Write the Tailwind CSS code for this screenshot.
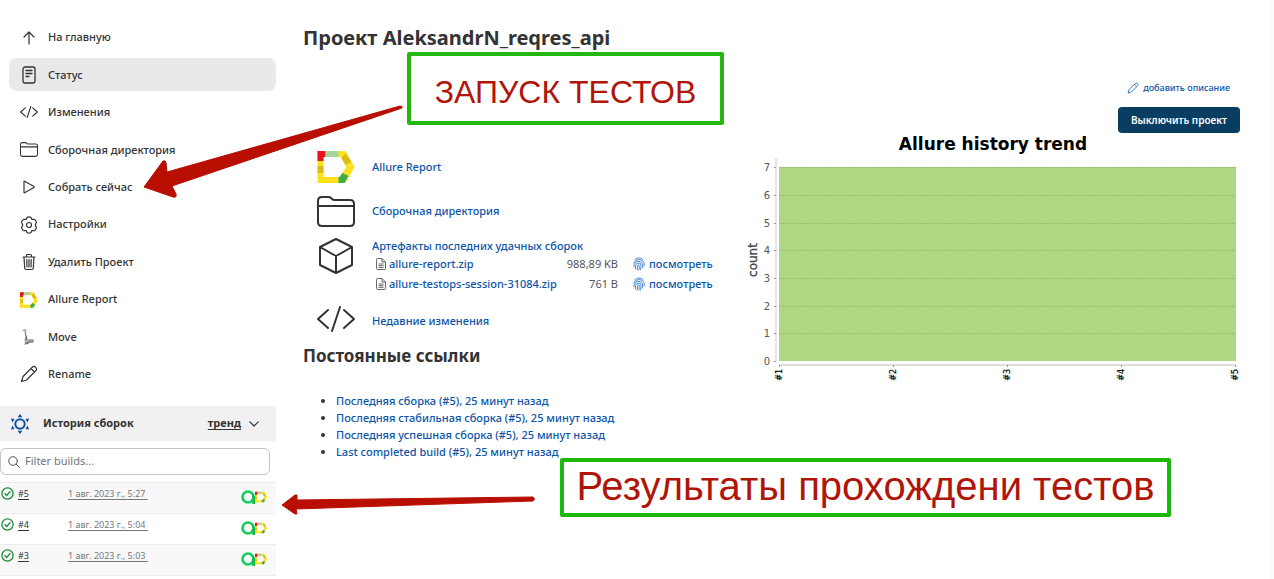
<!DOCTYPE html>
<html lang="ru">
<head>
<meta charset="utf-8">
<meta name="viewport" content="width=device-width, initial-scale=1">
<title>AleksandrN_reqres_api</title>
<script src="https://cdn.jsdelivr.net/npm/@tailwindcss/browser@4"></script>
</head>
<body class="relative flex min-h-screen overflow-x-hidden border-r-4 border-[#fbfbfb] bg-white font-['Noto_Sans','Open_Sans',sans-serif] text-[11px] text-[#333]">

<svg class="hidden" aria-hidden="true">
  <symbol id="allure" viewBox="0 0 37 32">
    <path fill="#ffe11a" d="M0 0H28L37 16L28 32H0ZM6 6V26H22L29 16L23 6Z" fill-rule="evenodd"/>
    <path fill="#e3141c" d="M0 0H8V6H6V10H0Z"/>
    <path fill="#a5d3a2" d="M8 0H21V6H8Z"/>
    <path fill="#dcbc16" d="M28 2L34 11L28 14L24 7ZM0 15H6V22H0Z"/>
    <path fill="#3fae49" d="M21 26H22L25 22L31 25L27 32H21Z"/>
  </symbol>
  <symbol id="folder" viewBox="0 0 38 31">
    <path d="M1 26V5Q1 1 5 1H11Q13 1 14 2L15 3Q16 4 18 4H33Q37 4 37 8V26Q37 30 33 30H5Q1 30 1 26ZM1 10H37" fill="none" stroke="currentColor" stroke-linejoin="round"/>
  </symbol>
  <symbol id="code" viewBox="0 0 38 26">
    <path d="M11 4L1 13L11 22M27 4L37 13L27 22M23 1L15 25" fill="none" stroke="currentColor" stroke-linecap="round" stroke-linejoin="round"/>
  </symbol>
  <symbol id="pencil" viewBox="0 0 18 18">
    <path d="M1.500 16.500L3 11.500L12.500 2Q14 .700 15.700 2.300Q17.300 4 16 5.500L6.500 15ZM11 3.500L14.500 7" fill="none" stroke="currentColor" stroke-width="1.200" stroke-linejoin="round"/>
  </symbol>
  <symbol id="file" viewBox="0 0 10 12">
    <path d="M.5 1.500Q.5 .5 1.500 .5H6L9.500 4V10.500Q9.500 11.500 8.500 11.500H1.500Q.5 11.500 .5 10.500ZM6 .5V4H9.500M2.500 6H7.500M2.500 7.700H7.500M2.500 9.400H7.500" fill="none" stroke="#555" stroke-width=".9"/>
  </symbol>
  <symbol id="finger" viewBox="0 0 12 14">
    <path d="M2 2.500Q6-.8 10 2.500M.8 6Q1.500 2.800 6 2.500Q10.500 2.800 11.200 6V9M1 10V8Q1.500 4.500 6 4.300Q9.500 4.500 9.600 8V11M2.500 12V8.500Q3 6 6 6Q8 6.200 8 8.500Q8 11 7.500 13M4.300 13Q4.500 11 4.500 9Q5 7.600 6 7.800Q6.500 9 6 13" fill="none" stroke="#3f7fce" stroke-width=".9" stroke-linecap="round"/>
  </symbol>
  <symbol id="ok" viewBox="0 0 13 13">
    <circle cx="6.500" cy="6.500" r="5.600" fill="none" stroke="#1e8a3c" stroke-width="1.300"/>
    <path d="M4 6.700L5.800 8.400L9 4.800" fill="none" stroke="#1e8a3c" stroke-width="1.400" stroke-linecap="round" stroke-linejoin="round"/>
  </symbol>
  <symbol id="testops" viewBox="0 0 14 14">
    <circle cx="7" cy="7" r="5.500" fill="none" stroke="#0fd05a" stroke-width="2.600"/>
    <path d="M11.300 3L14 6V14H11.300Z" fill="#14b84c"/>
  </symbol>
</svg>

<aside class="w-[276px] shrink-0">
  <nav class="mt-[21px] ml-[9px] flex h-[370px] flex-col justify-between font-medium">
    <a href="#" class="flex h-[33px] items-center gap-[10px] rounded-lg px-[11px]">
      <svg class="h-[18px] w-[18px]" viewBox="0 0 18 18" fill="none" stroke="currentColor" stroke-width="1.200" stroke-linecap="round" stroke-linejoin="round"><path d="M9 15V3M4 8L9 3L14 8"/></svg>На главную</a>
    <a href="#" class="flex h-[33px] items-center gap-[10px] rounded-lg bg-[#e9e9e9] px-[11px]">
      <svg class="h-[18px] w-[18px]" viewBox="0 0 18 18" fill="none" stroke="currentColor" stroke-width="1.300" stroke-linecap="round"><rect x="3" y="1" width="12" height="16" rx="2"/><path d="M6 4.500H12M6 7.500H12M6 10.500H9"/></svg>Статус</a>
    <a href="#" class="flex h-[33px] items-center gap-[10px] rounded-lg px-[11px]">
      <svg class="h-3 w-[18px] stroke-[2.400]"><use href="#code"/></svg>Изменения</a>
    <a href="#" class="flex h-[33px] items-center gap-[10px] rounded-lg px-[11px]">
      <svg class="h-[15px] w-[18px] stroke-[2.200]"><use href="#folder"/></svg>Сборочная директория</a>
    <a href="#" class="flex h-[33px] items-center gap-[10px] rounded-lg px-[11px]">
      <svg class="h-[18px] w-[18px]" viewBox="0 0 18 18" fill="none" stroke="currentColor" stroke-width="1.200" stroke-linejoin="round"><path d="M4 3.500Q4 3 4.500 3.200L14 8.600Q14.500 9 14 9.400L4.500 14.800Q4 15 4 14.500Z"/></svg>Собрать сейчас</a>
    <a href="#" class="flex h-[33px] items-center gap-[10px] rounded-lg px-[11px]">
      <svg class="h-[18px] w-[18px]" viewBox="0 0 18 18" fill="none" stroke="currentColor" stroke-width="1.200" stroke-linejoin="round"><circle cx="9" cy="9" r="2.500"/><path d="M7 1.500Q9 .300 11 1.500L11.800 3.300L14 3.300Q16 4 16.500 6.300L15.300 9L16.500 11.700Q16 14 14 14.700L11.800 14.700L11 16.500Q9 17.700 7 16.500L6.200 14.700L4 14.700Q2 14 1.500 11.700L2.700 9L1.500 6.300Q2 4 4 3.300L6.200 3.300Z"/></svg>Настройки</a>
    <a href="#" class="flex h-[33px] items-center gap-[10px] rounded-lg px-[11px]">
      <svg class="h-[18px] w-[18px]" viewBox="0 0 18 18" fill="none" stroke="currentColor" stroke-width="1.200" stroke-linecap="round" stroke-linejoin="round"><path d="M3 4H15M6.500 4V2.500Q6.500 1.500 7.500 1.500H10.500Q11.500 1.500 11.500 2.500V4M4 4L4.700 15Q4.800 16.500 6 16.500H12Q13.200 16.500 13.300 15L14 4M6.800 6.500L7 14M9 6.500V14M11.200 6.500L11 14"/></svg>Удалить Проект</a>
    <a href="#" class="flex h-[33px] items-center gap-[10px] rounded-lg px-[11px]">
      <svg class="h-4 w-[18px]"><use href="#allure"/></svg>Allure Report</a>
    <a href="#" class="flex h-[33px] items-center gap-[10px] rounded-lg px-[11px]">
      <svg class="h-[18px] w-[18px]" viewBox="0 0 18 18" fill="none" stroke-linecap="round"><path stroke="#c66" d="M3 2.500L5 1.500L6 3"/><path stroke="#777" stroke-width="1.100" d="M5 3L6 9L5 13M6.500 8L7 13"/><path stroke="#888" stroke-width="2" d="M6 14.500L13 13.500"/><path stroke="#555" d="M5 16L8 15.500M8 12L13 12"/></svg>Move</a>
    <a href="#" class="flex h-[33px] items-center gap-[10px] rounded-lg px-[11px]">
      <svg class="h-[18px] w-[18px]"><use href="#pencil"/></svg>Rename</a>
  </nav>

  <section class="mt-[15px]">
    <div class="flex h-[35px] items-center bg-[#f1f1f1] pr-[17px] pl-[10px] font-bold">
      <svg class="h-5 w-5" viewBox="0 0 20 20"><circle cx="10" cy="10" r="4.700" fill="none" stroke="#0b4ea2" stroke-width="2"/><path fill="#0b4ea2" d="M10 0L12.300 3.300H7.700ZM10 20L7.700 16.700H12.300ZM1 4.500L4.600 5L2.300 8.500ZM19 4.500L15.400 5L17.700 8.500ZM1 15.500L2.300 11.500L4.600 15ZM19 15.500L17.700 11.500L15.400 15Z"/></svg>
      <h2 class="ml-[13px] flex-1">История сборок</h2>
      <a href="#" class="underline underline-offset-2">тренд</a>
      <svg class="ml-2 h-[10px] w-[10px]" viewBox="0 0 10 10" fill="none" stroke="#333" stroke-width="1.200" stroke-linecap="round" stroke-linejoin="round"><path d="M.8 2.800L5 7L9.200 2.800"/></svg>
    </div>
    <label class="mt-[7px] mr-[6px] flex h-[27px] items-center gap-[5px] rounded-md border border-[#bcc4ca] px-[7px]">
      <svg class="h-3 w-3 shrink-0" viewBox="0 0 12 12" fill="none" stroke="#555" stroke-linecap="round"><circle cx="5" cy="5" r="4.300"/><path d="M8.200 8.200L11.300 11.300"/></svg>
      <input type="text" aria-label="Filter builds" placeholder="Filter builds..." class="w-full min-w-0 outline-none placeholder:text-[#757575]">
    </label>
    <table class="mt-[7px] w-full text-[9px] leading-[13px]">
      <tr class="h-[31px] border-t border-[#ececec] bg-[#f8f8f8] align-top">
        <td class="w-[68px] pt-1 pl-[1px]"><div class="flex items-center gap-1"><svg class="h-[13px] w-[13px]"><use href="#ok"/></svg><a href="#" class="underline underline-offset-2">#5</a></div></td>
        <td class="pt-1 text-[#777]"><a href="#" class="underline underline-offset-2">1 авг. 2023 г., 5:27&nbsp;</a></td>
        <td class="w-[35px] pt-[7px]"><div class="flex items-center"><svg class="h-[14px] w-[14px]"><use href="#testops"/></svg><svg class="h-3 w-3"><use href="#allure"/></svg></div></td>
      </tr>
      <tr class="h-[31px] border-t border-[#ececec] bg-white align-top">
        <td class="pt-1 pl-[1px]"><div class="flex items-center gap-1"><svg class="h-[13px] w-[13px]"><use href="#ok"/></svg><a href="#" class="underline underline-offset-2">#4</a></div></td>
        <td class="pt-1 text-[#777]"><a href="#" class="underline underline-offset-2">1 авг. 2023 г., 5:04&nbsp;</a></td>
        <td class="pt-[7px]"><div class="flex items-center"><svg class="h-[14px] w-[14px]"><use href="#testops"/></svg><svg class="h-3 w-3"><use href="#allure"/></svg></div></td>
      </tr>
      <tr class="h-[31px] border-y border-[#ececec] bg-[#f8f8f8] align-top">
        <td class="pt-1 pl-[1px]"><div class="flex items-center gap-1"><svg class="h-[13px] w-[13px]"><use href="#ok"/></svg><a href="#" class="underline underline-offset-2">#3</a></div></td>
        <td class="pt-1 text-[#777]"><a href="#" class="underline underline-offset-2">1 авг. 2023 г., 5:03&nbsp;</a></td>
        <td class="pt-[7px]"><div class="flex items-center"><svg class="h-[14px] w-[14px]"><use href="#testops"/></svg><svg class="h-3 w-3"><use href="#allure"/></svg></div></td>
      </tr>
    </table>
  </section>
</aside>

<main class="flex min-w-0 flex-1 justify-between pr-[30px] pl-[27px]">
  <div class="w-[440px] shrink-0 pt-6">
    <h1 class="text-[20px] leading-[28px] font-bold">Проект AleksandrN_reqres_api</h1>
    <div class="mt-[98px] flex flex-col gap-[11px] pl-[14px] font-medium text-[#0b55a8]">
      <div class="flex h-[34px] items-center gap-[17px]">
        <svg class="h-8 w-[38px]"><use href="#allure"/></svg>
        <a href="#">Allure Report</a>
      </div>
      <div class="flex h-[32px] items-center gap-[17px]">
        <svg class="h-[31px] w-[38px] stroke-2 text-[#333]"><use href="#folder"/></svg>
        <a href="#">Сборочная директория</a>
      </div>
      <div class="flex gap-[17px]">
        <svg class="h-[36px] w-[38px] text-[#333]" viewBox="0 0 38 36" fill="none" stroke="currentColor" stroke-width="2" stroke-linejoin="round"><path d="M19 1L35 9V27L19 35L3 27V9ZM3 9L19 18L35 9M19 18V35"/></svg>
        <div>
          <a href="#" class="block leading-[16px]">Артефакты последних удачных сборок</a>
          <table class="leading-5 whitespace-nowrap">
            <tr>
              <td class="w-[186px]"><a href="#" class="flex items-center gap-[3px] pl-1"><svg class="h-3 w-[10px]"><use href="#file"/></svg>allure-report.zip</a></td>
              <td class="w-[60px] text-right font-normal text-[#555]">988,89 KB</td>
              <td class="pl-[15px]"><a href="#" class="flex items-center gap-1"><svg class="h-[14px] w-3"><use href="#finger"/></svg>посмотреть</a></td>
            </tr>
            <tr>
              <td><a href="#" class="flex items-center gap-[3px] pl-1"><svg class="h-3 w-[10px]"><use href="#file"/></svg>allure-testops-session-31084.zip</a></td>
              <td class="text-right font-normal text-[#555]">761 B</td>
              <td class="pl-[15px]"><a href="#" class="flex items-center gap-1"><svg class="h-[14px] w-3"><use href="#finger"/></svg>посмотреть</a></td>
            </tr>
          </table>
        </div>
      </div>
      <div class="flex h-[28px] items-center gap-[17px]">
        <svg class="h-[26px] w-[38px] stroke-2 text-[#333]"><use href="#code"/></svg>
        <a href="#" class="pt-1">Недавние изменения</a>
      </div>
    </div>
    <h2 class="mt-[11px] text-[17px] leading-6 font-bold">Постоянные ссылки</h2>
    <ul class="mt-6 list-disc pl-[33px] leading-[17px] font-medium">
      <li><a href="#" class="text-[#0b55a8]">Последняя сборка (#5), 25 минут назад</a></li>
      <li><a href="#" class="text-[#0b55a8]">Последняя стабильная сборка (#5), 25 минут назад</a></li>
      <li><a href="#" class="text-[#0b55a8]">Последняя успешная сборка (#5), 25 минут назад</a></li>
      <li><a href="#" class="text-[#0b55a8]">Last completed build (#5), 25 минут назад</a></li>
    </ul>
  </div>

  <div class="flex w-[495px] shrink-0 flex-col items-end pt-20">
    <a href="#" class="mr-[10px] flex h-4 items-center gap-1 text-[9px] font-medium text-[#0b55a8]"><svg class="h-3 w-3"><use href="#pencil"/></svg>добавить описание</a>
    <button type="button" class="mt-[11px] h-[26px] rounded bg-[#0a3d62] px-[13px] text-[10px] font-semibold text-white">Выключить проект</button>
    <svg class="w-full" viewBox="745 133 495 255" role="img" aria-label="Allure history trend" font-family="DejaVu Sans, sans-serif">
      <text x="993" y="150" text-anchor="middle" font-size="17" font-weight="bold" fill="#000">Allure history trend</text>
      <path fill="#aed683" d="M779 167H1236V361H779Z"/>
      <g stroke="#8fb569" stroke-dasharray="2 1" opacity=".7">
        <path d="M779 167.500H1236M779 195.500H1236M779 223.500H1236M779 250.500H1236M779 278.500H1236M779 306.500H1236M779 333.500H1236"/>
      </g>
      <path d="M776 158V361" stroke="#ccc"/>
      <path d="M779 365H1236" stroke="#bbb"/>
      <path d="M774 167.500H776M774 195.500H776M774 223.500H776M774 250.500H776M774 278.500H776M774 306.500H776M774 333.500H776M774 361.500H776M779.500 365V367M893.500 365V367M1007.500 365V367M1121.500 365V367M1235.500 365V367" stroke="#999"/>
      <g font-size="10" fill="#555" text-anchor="end">
        <text x="770" y="171">7</text><text x="770" y="199">6</text><text x="770" y="227">5</text><text x="770" y="254">4</text><text x="770" y="282">3</text><text x="770" y="310">2</text><text x="770" y="337">1</text><text x="770" y="365">0</text>
      </g>
      <text transform="translate(757 260) rotate(-90)" text-anchor="middle" font-size="12" fill="#444" stroke="#444" stroke-width=".3">count</text>
      <g font-size="8" fill="#000" stroke="#000" stroke-width=".2" text-anchor="end">
        <text transform="translate(782 369) rotate(-90)">#1</text>
        <text transform="translate(896 369) rotate(-90)">#2</text>
        <text transform="translate(1010 369) rotate(-90)">#3</text>
        <text transform="translate(1124 369) rotate(-90)">#4</text>
        <text transform="translate(1238 369) rotate(-90)">#5</text>
      </g>
    </svg>
  </div>
</main>

<!-- Callouts over the page -->
<div class="absolute top-[52px] left-[407px] flex h-[73px] w-[317px] items-center justify-center rounded-xs border-4 border-[#22b80e] pt-[6px] font-['Liberation_Sans',Arial,sans-serif] text-[32px] whitespace-nowrap text-[#b01508]">ЗАПУСК ТЕСТОВ</div>
<div class="absolute top-[458px] left-[560px] flex h-[59px] w-[611px] items-center justify-center rounded-xs border-4 border-[#1cb80a] pb-1 font-['Liberation_Sans',Arial,sans-serif] text-[40px] whitespace-nowrap text-[#b01508]">Результаты прохождени тестов</div>
<svg class="pointer-events-none absolute top-[100px] left-[140px] h-[100px] w-[266px]" viewBox="140 100 266 100" aria-hidden="true"><path d="M144 187L163 161Q166 160 166 163L167 172L400 106Q403 106 402 108L172 186L176 194Q177 198 173 197Z" fill="#b80f02" stroke="#b80f02" stroke-linejoin="round"/></svg>
<svg class="pointer-events-none absolute top-[490px] left-[280px] h-[28px] w-[258px]" viewBox="280 490 258 28" aria-hidden="true"><path d="M282 505L295 495L297 495V500L533 497Q536 499 533 501L296 509L297 514H295Z" fill="#b80f02" stroke="#b80f02" stroke-linejoin="round"/></svg>
</body>
</html>
